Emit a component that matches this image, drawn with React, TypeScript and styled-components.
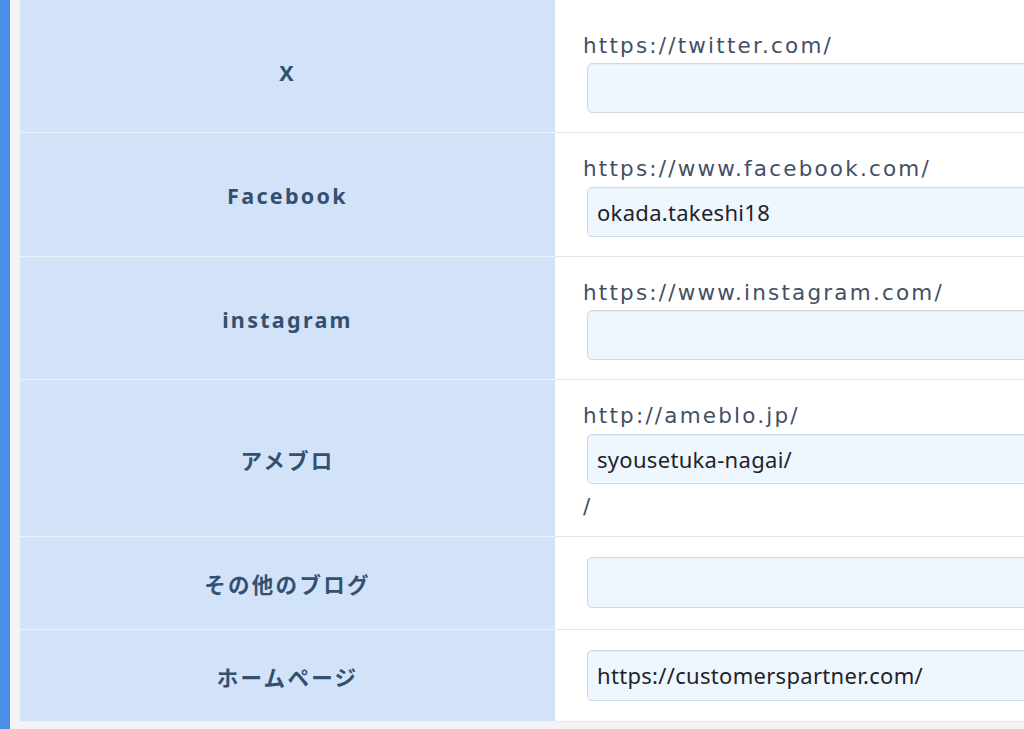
import React from "react";
import styled, { createGlobalStyle } from "styled-components";

const Global = createGlobalStyle`
  html, body { margin: 0; padding: 0; background: #f4f4f4; overflow: hidden; }
  body { width: 1024px; height: 729px; }
`;

const Page = styled.div`
  display: flex;
  gap: 10px;
  height: 729px;
`;

const SideBar = styled.div`
  width: 10px;
  flex: none;
  background: #4a8ee5;
`;

const Table = styled.div`
  flex: none;
  width: 1100px;
  display: flex;
  flex-direction: column;
`;

const Row = styled.div<{ $stub?: boolean }>`
  display: grid;
  grid-template-columns: 535px 1fr;
  ${(p) => (p.$stub ? "height: 10px; overflow: hidden;" : "")}
`;

const Label = styled.div`
  background: #d1e2f9;
  border-bottom: 1px solid #ecf2fc;
  display: flex;
  align-items: center;
  justify-content: center;
  padding-top: 2px;
  font-family: "Noto Sans", "Noto Sans CJK JP", sans-serif;
  font-weight: 700;
  font-size: 21.5px;
  letter-spacing: 2.3px;
  color: #34506f;
`;

const Value = styled.div<{ $plain?: boolean }>`
  background: #ffffff;
  border-bottom: 1px solid #e4e6ea;
  padding: ${(p) => (p.$plain ? "20px 0 20.5px 28px" : "21px 0 19px 28px")};
  display: flex;
  flex-direction: column;
  gap: 3px;
`;

const Affix = styled.div`
  font-family: "DejaVu Sans", sans-serif;
  font-size: 21.5px;
  line-height: 29.4px;
  letter-spacing: 2.2px;
  color: #435063;
`;

const Suffix = styled(Affix)`
  line-height: 30.6px;
  margin-top: 5.6px;
  margin-bottom: -5.6px;
`;

const Input = styled.div<{ $tall?: boolean }>`
  margin-left: 4px;
  width: 520px;
  height: ${(p) => (p.$tall ? "51px" : "50px")};
  box-sizing: border-box;
  background: #eef7fe;
  border: 1px solid #d3d8de;
  border-radius: 5px;
  box-shadow: inset 0 1px 1px rgba(0, 0, 0, 0.04);
  padding: 0 9px;
  display: flex;
  align-items: center;
  font-family: "Noto Sans", sans-serif;
  font-size: 22px;
  letter-spacing: 0.3px;
  color: #1f2328;
`;

type Item = { label: string; prefix?: string; value: string; suffix?: string };

const items: Item[] = [
  { label: "X", prefix: "https://twitter.com/", value: "" },
  { label: "Facebook", prefix: "https://www.facebook.com/", value: "okada.takeshi18" },
  { label: "instagram", prefix: "https://www.instagram.com/", value: "" },
  { label: "アメブロ", prefix: "http://ameblo.jp/", value: "syousetuka-nagai/", suffix: "/" },
  { label: "その他のブログ", value: "" },
  { label: "ホームページ", value: "https://customerspartner.com/" },
];

export default function App() {
  return (
    <>
      <Global />
      <Page>
        <SideBar />
        <Table>
          <Row $stub>
            <Label />
            <Value />
          </Row>
          {items.map((it) => (
            <Row key={it.label}>
              <Label>{it.label}</Label>
              <Value $plain={!it.prefix}>
                {it.prefix && <Affix>{it.prefix}</Affix>}
                <Input $tall={!it.prefix}>{it.value}</Input>
                {it.suffix && <Suffix>{it.suffix}</Suffix>}
              </Value>
            </Row>
          ))}
        </Table>
      </Page>
    </>
  );
}
